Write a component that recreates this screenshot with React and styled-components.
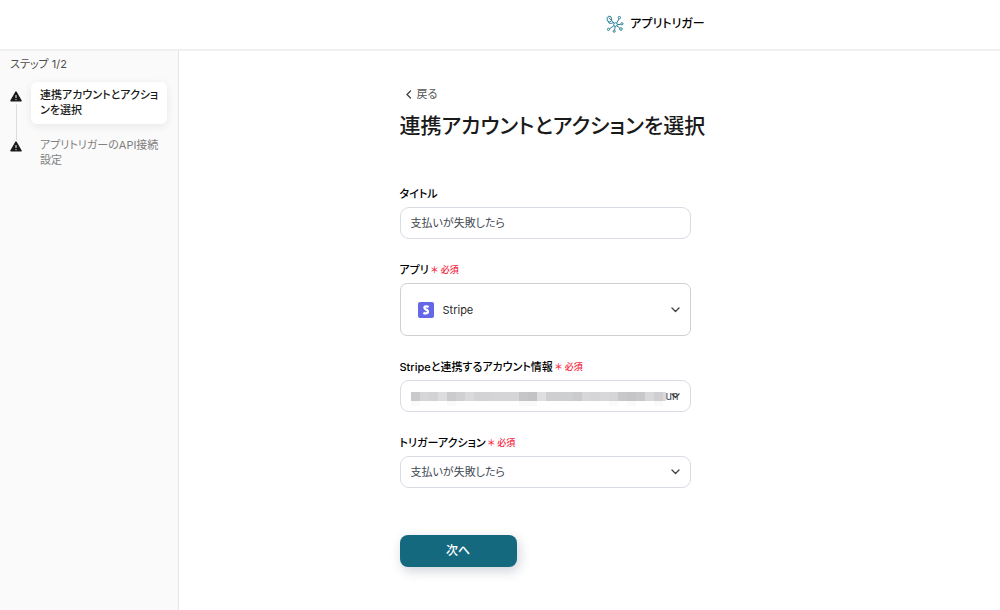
import { useId } from "react";
import styled, { createGlobalStyle, css } from "styled-components";

const GlobalStyle = createGlobalStyle`
  *,
  *::before,
  *::after {
    box-sizing: border-box;
  }

  body {
    margin: 0;
    background-color: #fff;
    color: #1a1a1a;
    font-family: Inter, "Noto Sans CJK JP", sans-serif;
    font-size: 11px;
    line-height: 16px;
    font-feature-settings: "palt";
  }

  h1, p, ol {
    margin: 0;
    padding: 0;
  }

  button, input, select {
    font: inherit;
    font-feature-settings: inherit;
    color: inherit;
  }
`;

const Page = styled.div`
  display: flex;
  flex-direction: column;
  min-height: 100vh;
`;

const Header = styled.header`
  display: grid;
  grid-template-columns: 178px 1fr;
  height: 51px;
  border-bottom: 2px solid #f0f0f0;
`;

const Brand = styled.div`
  grid-column: 2;
  display: flex;
  align-items: center;
  justify-content: center;
  gap: 6px;
  padding: 0 0 2px 133px;
  color: #000;
  font-size: 12px;
  font-weight: 500;
`;

const Body = styled.div`
  flex: 1;
  display: grid;
  grid-template-columns: 179px 1fr;
`;

const Sidebar = styled.aside`
  padding: 5px 11px 5px 10px;
  background-color: #fafafa;
  border-right: 1px solid #e6e6e6;
`;

const StepCount = styled.p`
  color: #4d4d4d;
`;

const StepList = styled.ol`
  display: flex;
  flex-direction: column;
  gap: 8px;
  margin-top: 10px;
  list-style: none;
`;

const Step = styled.li`
  display: grid;
  grid-template-columns: 12px 1fr;
  gap: 9px;
`;

const StepMarker = styled.span`
  position: relative;
  display: flex;
  justify-content: center;
  padding-top: 9px;

  ${(props) =>
    props.$linked &&
    css`
      &::after {
        content: "";
        position: absolute;
        top: 22px;
        bottom: -16px;
        width: 1px;
        background-color: #dcdcdc;
      }
    `}
`;

const StepName = styled.span`
  padding: 6px 8px 6px 9px;
  border-radius: 6px;
  line-height: 15px;
  color: #808080;

  ${(props) =>
    props.$active &&
    css`
      background-color: #fff;
      box-shadow: 0 2px 8px rgba(0, 0, 0, 0.08);
      color: #1a1a1a;
      font-weight: 500;
    `}
`;

const Main = styled.main`
  display: flex;
  justify-content: center;
  padding: 35px 40px;
`;

const Form = styled.form`
  display: flex;
  flex-direction: column;
  align-items: flex-start;
  width: 380px;
`;

const BackButton = styled.button`
  display: flex;
  align-items: center;
  gap: 5px;
  padding: 0 5px;
  border: none;
  background: none;
  color: #555;
`;

const Title = styled.h1`
  margin: 10px 0 46px;
  font-size: 21px;
  line-height: 28px;
  font-weight: 500;
  white-space: nowrap;
`;

const Fields = styled.div`
  display: flex;
  flex-direction: column;
  gap: 23px;
  width: 291px;
`;

const StyledField = styled.div`
  display: flex;
  flex-direction: column;
  gap: 5px;
`;

const FieldHead = styled.div`
  display: flex;
  align-items: center;
  gap: 2px;
`;

const Label = styled.label`
  color: #000;
  font-weight: 500;
`;

const Required = styled.span`
  font-size: 9px;
  font-weight: 500;
  color: #f5253d;
`;

const Control = styled.div`
  position: relative;
  display: flex;
  align-items: center;
  height: ${(props) => (props.$tall ? "53px" : "32px")};
  padding: ${(props) => (props.$tall ? "0 10px 0 17px" : "0 10px")};
  border: 1px solid ${(props) => (props.$tall ? "#d0d0d0" : "#d8dce3")};
  border-radius: ${(props) => (props.$tall ? "7px" : "9px")};
  color: ${(props) => (props.$tall ? "#2b2b2b" : "#414750")};
`;

const Input = styled.input`
  flex: 1;
  min-width: 0;
  padding: 0;
  border: none;
  outline: none;
  background: none;
`;

const Select = styled.select`
  flex: ${(props) => (props.$narrow ? "0 0 14px" : "1")};
  min-width: 0;
  height: 100%;
  padding: 0 0 0 ${(props) => (props.$indent ? "9px" : "0")};
  border: none;
  outline: none;
  background: none;
  appearance: none;
`;

const Chevron = styled.svg`
  position: absolute;
  right: 10px;
  pointer-events: none;
`;

const MaskStrip = styled.svg`
  flex: 1;
  min-width: 0;
  height: 20px;
`;

const SubmitButton = styled.button`
  width: 117px;
  height: 32px;
  margin-top: 47px;
  border: none;
  border-radius: 8px;
  background-color: #15697f;
  box-shadow: 2px 4px 12px rgba(30, 50, 80, 0.22);
  color: #fff;
  font-size: 12px;
  font-weight: 500;
`;

function BrandIcon() {
  return (
    <svg width="18" height="18" viewBox="0 0 18 18" fill="none" stroke="#2b7f99" aria-hidden="true">
      <circle cx="9.5" cy="9.5" r="1.8" />
      <path d="M10.6 8 13 4M11.3 9.5H14.6M10.8 10.8l2.8 2M9.2 11.3l-.6 3.6M8 10.6l-4.6 3.2M8.2 8.3 5.6 5.8" />
      <circle cx="13.4" cy="2.6" r="1.2" />
      <circle cx="15.9" cy="8.8" r="1.1" />
      <circle cx="14.9" cy="14" r="1.3" />
      <circle cx="8.2" cy="16.2" r="1.1" />
      <circle cx="2.5" cy="14.4" r="1.1" />
      <path d="M1 2.8 2.8 1l2.2.8.9 3.8L3.6 7 1.4 5.6zM2.6 2.6l3 3M1.8 5.8l1.4 2.4 2.4.2 2-1" />
    </svg>
  );
}

function WarningIcon() {
  return (
    <svg width="12" height="11" viewBox="0 0 12 11" aria-hidden="true">
      <path d="M6 1.2 11 9.8H1z" fill="#1a1a1a" stroke="#1a1a1a" strokeWidth="1.6" strokeLinejoin="round" />
      <path d="M6 4v3M6 8.2v1" stroke="#fafafa" />
    </svg>
  );
}

function StripeIcon() {
  return (
    <svg width="16" height="16" viewBox="0 0 16 16" aria-hidden="true">
      <rect width="16" height="16" rx="2" fill="#6468e6" />
      <path
        d="M10.6 5C9.9 4.6 9 4.4 8.2 4.4c-1.1 0-1.8.4-1.8 1.3 0 2.1 3.6 1.8 3.6 3.9 0 1.3-1 1.8-2.2 1.8-.9 0-1.8-.3-2.4-.7"
        fill="none"
        stroke="#fff"
        strokeWidth="2.3"
      />
    </svg>
  );
}

function SelectChevron() {
  return (
    <Chevron width="9" height="6" viewBox="0 0 9 6" fill="none" aria-hidden="true">
      <path d="m1 1 3.5 3.5L8 1" stroke="#444" strokeWidth="1.4" strokeLinecap="round" strokeLinejoin="round" />
    </Chevron>
  );
}

const maskTones = [
  "#c9c9cb", "#d6d6d8", "#d2d2d4", "#dcdcde", "#cbcbcd", "#d0d0d2", "#dadadc",
  "#d3d3d5", "#d3d3d5", "#d5d5d7", "#d5d5d7", "#d5d5d7", "#c6c6c8", "#c3c3c5",
  "#dedee0", "#cfcfd1", "#cfcfd1", "#cecfd1", "#cbcbcd", "#d7d7d9", "#d5d5d7",
  "#d8d8da", "#d5d5d7", "#c8c8ca", "#c5c5c7", "#c8c8ca", "#d8d8da", "#cfcfd1",
  "#d9d9db",
];

// blocks where descenders bleed into the row below
const maskTails = [0, 4, 12, 13, 22, 24, 27];

function MaskedText() {
  return (
    <MaskStrip aria-hidden="true" shapeRendering="crispEdges">
      {maskTones.map((tone, i) => (
        <rect key={i} x={i * 9} y="6" width="9" height="9" fill={tone} />
      ))}
      {maskTails.map((i) => (
        <rect key={i} x={i * 9} y="15" width="9" height="5" fill="#fafafa" />
      ))}
    </MaskStrip>
  );
}

function Field({ label, required, tall, children }) {
  const id = useId();

  return (
    <StyledField>
      <FieldHead>
        <Label htmlFor={id}>{label}</Label>
        {required && <Required>＊ 必須</Required>}
      </FieldHead>
      <Control $tall={tall}>{children(id)}</Control>
    </StyledField>
  );
}

const steps = [
  { name: "連携アカウントとアクションを選択", active: true },
  { name: "アプリトリガーのAPI接続設定", active: false },
];

export default function App() {
  return (
    <Page>
      <GlobalStyle />
      <Header>
        <Brand>
          <BrandIcon />
          アプリトリガー
        </Brand>
      </Header>
      <Body>
        <Sidebar>
          <StepCount>ステップ 1/2</StepCount>
          <StepList>
            {steps.map((step, i) => (
              <Step key={step.name}>
                <StepMarker $linked={i < steps.length - 1}>
                  <WarningIcon />
                </StepMarker>
                <StepName $active={step.active}>{step.name}</StepName>
              </Step>
            ))}
          </StepList>
        </Sidebar>
        <Main>
          <Form onSubmit={(e) => e.preventDefault()}>
            <BackButton type="button">
              <svg width="7" height="9" viewBox="0 0 7 9" fill="none" aria-hidden="true">
                <path d="M5.5 1 2 4.5 5.5 8" stroke="#444" strokeWidth="1.3" strokeLinecap="round" />
              </svg>
              戻る
            </BackButton>
            <Title>連携アカウントとアクションを選択</Title>
            <Fields>
              <Field label="タイトル">
                {(id) => <Input id={id} type="text" defaultValue="支払いが失敗したら" />}
              </Field>
              <Field label="アプリ" required tall>
                {(id) => (
                  <>
                    <StripeIcon />
                    <Select id={id} $indent>
                      <option>Stripe</option>
                    </Select>
                    <SelectChevron />
                  </>
                )}
              </Field>
              <Field label="Stripeと連携するアカウント情報" required>
                {(id) => (
                  <>
                    <MaskedText />
                    <Select id={id} $narrow>
                      <option>un</option>
                    </Select>
                    <SelectChevron />
                  </>
                )}
              </Field>
              <Field label="トリガーアクション" required>
                {(id) => (
                  <>
                    <Select id={id}>
                      <option>支払いが失敗したら</option>
                    </Select>
                    <SelectChevron />
                  </>
                )}
              </Field>
            </Fields>
            <SubmitButton type="submit">次へ</SubmitButton>
          </Form>
        </Main>
      </Body>
    </Page>
  );
}
